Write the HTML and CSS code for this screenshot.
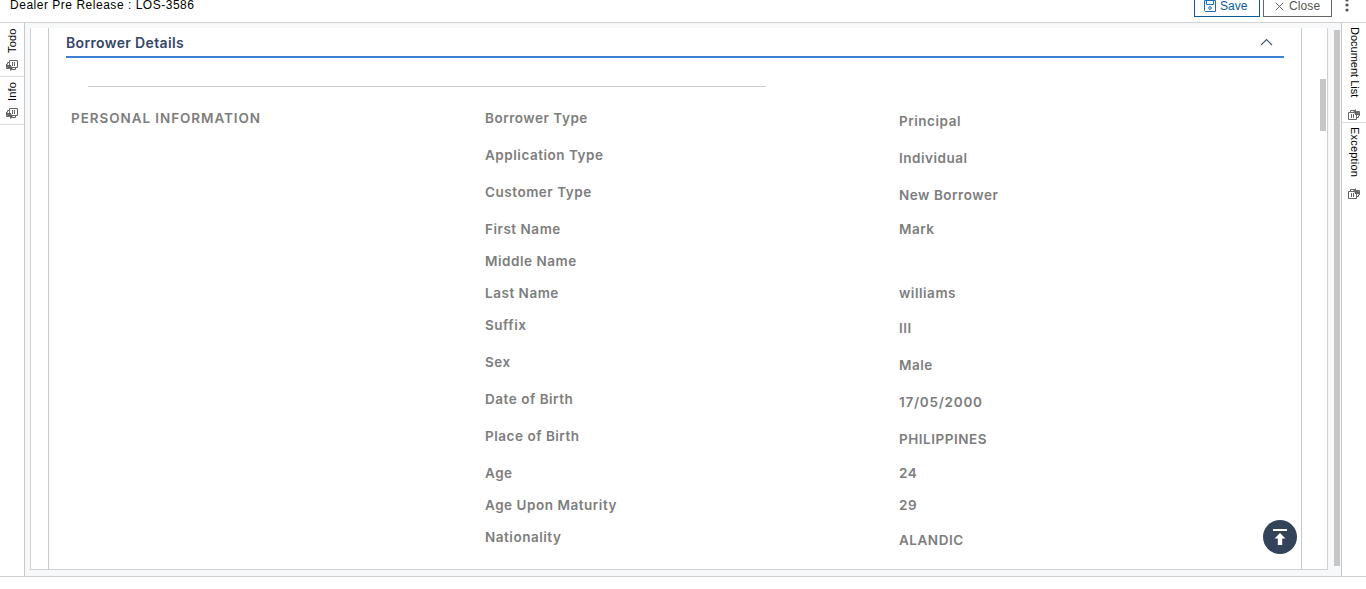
FILE: index.html
```html
<!DOCTYPE html>
<html lang="en">
<head>
<meta charset="utf-8">
<title>Dealer Pre Release</title>
<link rel="stylesheet" href="styles.css">
</head>
<body>
<svg class="defs" width="0" height="0">
  <symbol id="windows" viewBox="0 0 12 11">
    <path d="M3.5 .5h8v7h-8z" fill="#fff" stroke="#666"/>
    <path d="M3 2.500H1.500v2M.5 4v4.500h3M5 9.500h4.500V8" fill="none" stroke="#666"/>
    <path d="M6.500 2v4M8.500 2v4" stroke="#666"/>
    <path d="M1 5h4v1l2 2-3 3V9L1 7.500z" fill="#666"/>
  </symbol>
</svg>
<header class="topbar">
  <div class="title">Dealer Pre Release : LOS-3586</div>
  <div class="actions">
    <button class="btn save"><svg width="12" height="12" viewBox="0 0 12 12" fill="none" stroke="#1470b8"><path d="M.5.500h11v11h-10l-1-1zM2.500.500v4h7v-4"/><circle cx="6" cy="8" r="1.300"/></svg><span>Save</span></button>
    <button class="btn close"><svg width="9" height="9" viewBox="0 0 9 9" stroke="#555" stroke-width=".9"><path d="M.7.700l7.600 7.600M8.300.700L.7 8.300"/></svg><span>Close</span></button>
    <svg class="more" width="4" height="14" viewBox="0 0 4 14" fill="#555"><circle cx="2" cy="2" r="1.600"/><circle cx="2" cy="7" r="1.600"/><circle cx="2" cy="12" r="1.600"/></svg>
  </div>
</header>
<main class="workspace">
  <nav class="rail left">
    <div class="tab todo"><span>Todo</span><svg class="ico" width="12" height="11"><use href="#windows"/></svg></div>
    <div class="tab info"><span>Info</span><svg class="ico" width="12" height="11"><use href="#windows"/></svg></div>
  </nav>
  <div class="stage">
    <div class="panel">
      <section class="sheet">
        <div class="heading"><h2>Borrower Details</h2><svg width="14" height="8" viewBox="0 0 14 8" fill="none" stroke="#44546e" stroke-width="1.200"><path d="M1 7.200l5.500-5.500L12 7.200"/></svg></div>
        <div class="divider"></div>
        <div class="fields">
          <h3>PERSONAL INFORMATION</h3>
          <dl>
            <div class="row tall"><dt>Borrower Type</dt><dd>Principal</dd></div>
            <div class="row tall"><dt>Application Type</dt><dd>Individual</dd></div>
            <div class="row tall"><dt>Customer Type</dt><dd>New Borrower</dd></div>
            <div class="row"><dt>First Name</dt><dd>Mark</dd></div>
            <div class="row"><dt>Middle Name</dt><dd></dd></div>
            <div class="row"><dt>Last Name</dt><dd>williams</dd></div>
            <div class="row tall"><dt>Suffix</dt><dd>III</dd></div>
            <div class="row tall"><dt>Sex</dt><dd>Male</dd></div>
            <div class="row tall"><dt>Date of Birth</dt><dd class="wide">17/05/2000</dd></div>
            <div class="row tall"><dt>Place of Birth</dt><dd>PHILIPPINES</dd></div>
            <div class="row"><dt>Age</dt><dd>24</dd></div>
            <div class="row"><dt>Age Upon Maturity</dt><dd>29</dd></div>
            <div class="row tall"><dt>Nationality</dt><dd>ALANDIC</dd></div>
          </dl>
        </div>
      </section>
      <div class="gutter"><div class="thumb"></div></div>
      <button class="totop"><svg width="14" height="17" viewBox="0 0 14 17" fill="#fff"><path d="M0 0h14v2H0zM7 4l5.500 5.500H9.200V16H4.800V9.500H1.500z"/></svg></button>
    </div>
    <div class="scroll"></div>
  </div>
  <nav class="rail right">
    <div class="tab docs"><span>Document List</span><svg class="ico" width="12" height="11"><use href="#windows"/></svg></div>
    <div class="tab exception"><span>Exception</span><svg class="ico" width="12" height="11"><use href="#windows"/></svg></div>
  </nav>
</main>
</body>
</html>
```
FILE: styles.css
```css
* { box-sizing: border-box; }
body { margin: 0; height: 589px; overflow: hidden; background: #fff; font-family: "Liberation Sans", Arial, sans-serif; color: #000; }
.defs { display: block; height: 0; }
h2, h3, dl, dd { margin: 0; }
.topbar { height: 23px; display: flex; justify-content: space-between; align-items: flex-start; border-bottom: 1px solid #d0d1d3; }
.title { margin: -3px 0 0 10px; font-size: 12px; line-height: 16px; letter-spacing: .52px; white-space: nowrap; }
.actions { display: flex; gap: 3px; padding-right: 17px; }
.btn { display: flex; align-items: center; height: 23px; margin-top: -6px; padding: 1px 0 0; background: #fff; font: 12px/16px "Liberation Sans", Arial, sans-serif; }
.save { width: 66px; border: 1px solid #0a5a9c; color: #0a5a9c; padding-left: 9px; gap: 4px; }
.close { width: 69px; border: 1px solid #666; color: #555; padding-left: 11px; gap: 5px; }
.close span { letter-spacing: .1px; }
.more { margin: -2px 0 0 10px; }
.workspace { height: 554px; display: flex; border-bottom: 1px solid #d0d1d3; }
.rail { width: 25px; flex: none; }
.left { border-right: 1px solid #c8c9cb; }
.right { border-left: 1px solid #c8c9cb; }
.tab { display: flex; flex-direction: column; align-items: center; border-bottom: 1px solid #dcdcdc; font-size: 11px; line-height: 13px; letter-spacing: .2px; }
.tab span { writing-mode: vertical-rl; white-space: nowrap; display: block; }
.left span { transform: rotate(180deg); }
.todo { height: 54px; padding-top: 5px; }
.todo span { height: 25px; margin-bottom: 7px; }
.info { height: 48px; padding-top: 5px; }
.info span { height: 19px; margin-bottom: 7px; }
.right .ico { transform: rotate(180deg); }
.docs { height: 100px; padding-top: 4px; }
.docs span { height: 74px; margin-bottom: 8px; letter-spacing: 0; }
.exception { border: 0; padding-top: 4px; }
.exception span { height: 53px; margin-bottom: 8px; }
.stage { flex: 1; display: flex; padding: 5px 1px 6px 5px; background: #f7f8fa; }
.panel { width: 1298px; display: flex; position: relative; background: #fff; border: solid #d0d1d3; border-width: 0 1px 1px; padding-left: 17px; }
.sheet { width: 1254px; border: solid #c8c9cb; border-width: 0 1px; padding: 0 17px; }
.heading { height: 30px; display: flex; justify-content: space-between; align-items: center; border-bottom: 2px solid #3b82d4; padding-right: 10px; }
h2 { font: 600 14px/18px Inter, sans-serif; color: #34466a; padding-top: 2px; letter-spacing: .35px; }
.divider { width: 678px; height: 1px; margin: 28px 0 0 22px; background: #cbcbcb; }
.fields { display: flex; padding: 23px 0 0 5px; font: 600 13.5px/16px Inter, sans-serif; color: #7d7d7d; letter-spacing: .53px; }
h3 { width: 414px; font: inherit; letter-spacing: .93px; }
.row { display: grid; grid-template-columns: 414px 300px; height: 32px; }
.tall { height: 37px; }
.tall dd { padding-top: 3px; }
.wide { letter-spacing: .75px; }
.gutter { width: 25px; padding: 51px 1px 0 18px; }
.thumb { width: 6px; height: 52px; background: #c6c6c6; }
.scroll { width: 6px; height: 536px; margin: 2px 0 0 6px; background: #c6c6c6; }
.totop { position: absolute; right: 30px; bottom: 15px; width: 34px; height: 34px; border: 0; border-radius: 50%; background: #33445a; padding: 1px 0 0; display: grid; place-items: center; }
```
